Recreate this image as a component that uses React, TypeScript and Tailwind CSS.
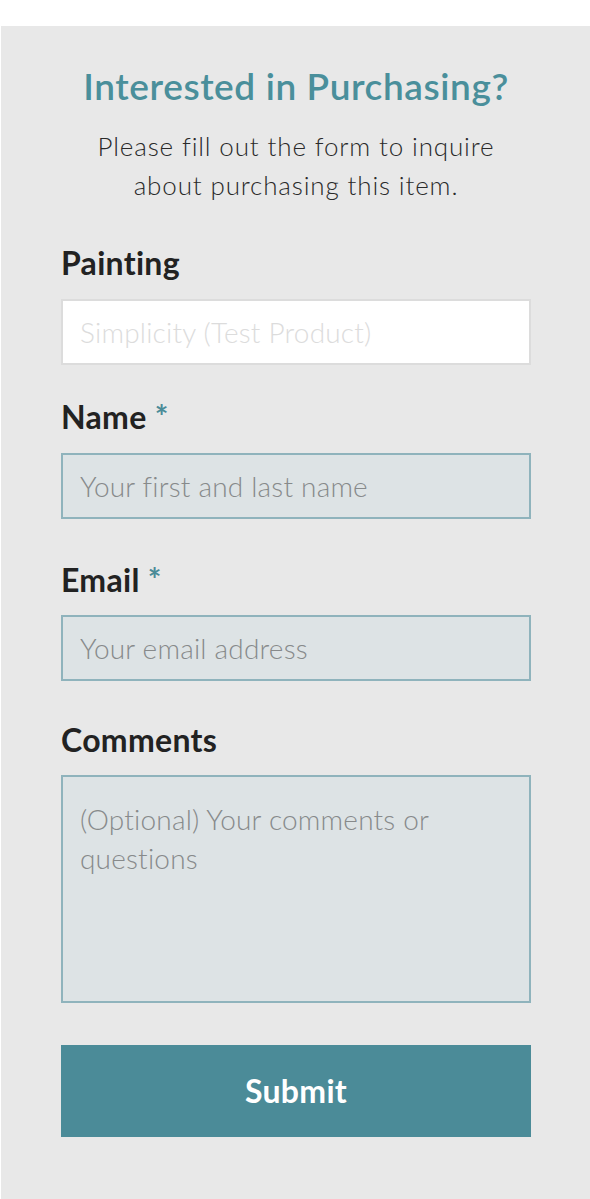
export default function App() {
  const font = { fontFamily: 'Lato, "Open Sans", sans-serif' };

  return (
    <div className="min-h-screen bg-white pt-[26px] pl-[1px]" style={font}>
      <div className="bg-[#e8e8e8] pl-[60px] pr-[59px] pt-[38px] pb-[62px]">
        <h2 className="text-center text-[37px] leading-[44px] font-semibold text-[#4a8f9b] tracking-[0.6px]">
          Interested in Purchasing?
        </h2>
        <p className="mt-[19px] text-center text-[26px] leading-[39px] font-light text-[#2a2a2a] tracking-[0.85px]">
          Please fill out the form to inquire
          <br />
          about purchasing this item.
        </p>

        <form className="mt-[40px] flex flex-col" onSubmit={(e) => e.preventDefault()}>
          <label className="block h-[36px] text-[32px] leading-[36px] font-bold text-[#222] tracking-[0.3px]">
            Painting
          </label>
          <input
            type="text"
            readOnly
            placeholder="Simplicity (Test Product)"
            className="mt-[18px] h-[66px] w-full border-2 border-[#dcdcdc] bg-white px-[17px] text-[28px] font-light tracking-[0.2px] text-[#222] outline-none placeholder:text-[#dcdcdc]"
          />

          <label className="mt-[34px] block h-[36px] text-[32px] leading-[36px] font-bold text-[#222] tracking-[0.3px]">
            Name <span className="text-[#4b8b98]">*</span>
          </label>
          <input
            type="text"
            placeholder="Your first and last name"
            className="mt-[18px] h-[66px] w-full border-2 border-[#8fb3bc] bg-[#dde3e5] px-[17px] text-[28px] font-light tracking-[0.2px] text-[#222] outline-none placeholder:text-[#878a8b]"
          />

          <label className="mt-[43px] block h-[36px] text-[32px] leading-[36px] font-bold text-[#222] tracking-[0.3px]">
            Email <span className="text-[#4b8b98]">*</span>
          </label>
          <input
            type="email"
            placeholder="Your email address"
            className="mt-[17px] h-[66px] w-full border-2 border-[#8fb3bc] bg-[#dde3e5] px-[17px] text-[28px] font-light tracking-[0.2px] text-[#222] outline-none placeholder:text-[#878a8b]"
          />

          <label className="mt-[41px] block h-[36px] text-[32px] leading-[36px] font-bold text-[#222] tracking-[0.3px]">
            Comments
          </label>
          <textarea
            placeholder="(Optional) Your comments or questions"
            className="mt-[17px] h-[228px] w-full resize-none border-2 border-[#8fb3bc] bg-[#dde3e5] px-[17px] pt-[23px] pb-[20px] text-[28px] font-light tracking-[0.2px] leading-[39px] text-[#222] outline-none placeholder:text-[#878a8b]"
          />

          <button
            type="submit"
            className="mt-[42px] h-[92px] w-full bg-[#4b8b98] text-[32px] font-bold tracking-[0.3px] text-white"
          >
            Submit
          </button>
        </form>
      </div>
    </div>
  );
}
